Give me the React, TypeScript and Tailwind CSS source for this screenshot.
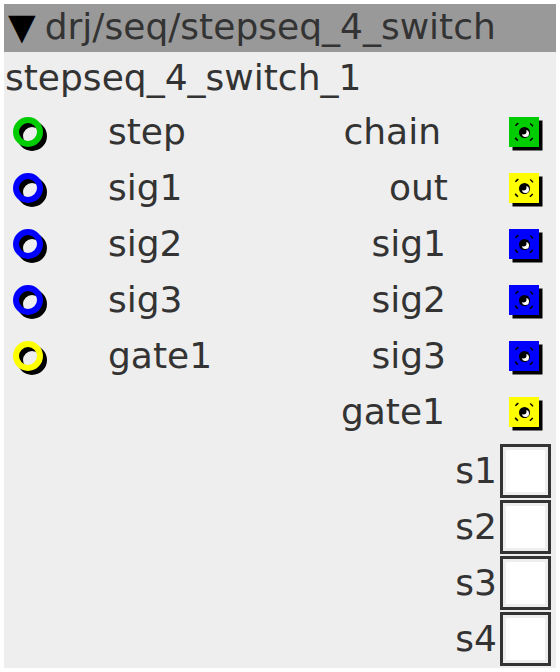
import React from 'react';

type Port = { name: string; color: string; nudge?: number };

const inlets: Port[] = [
  { name: 'step', color: '#00cc00' },
  { name: 'sig1', color: '#0000ff' },
  { name: 'sig2', color: '#0000ff' },
  { name: 'sig3', color: '#0000ff' },
  { name: 'gate1', color: '#ffff00' },
];

// labels are not all flush right in the original, nudge keeps them where they sit
const outlets: Port[] = [
  { name: 'chain', color: '#00cc00', nudge: 7 },
  { name: 'out', color: '#ffff00', nudge: 0 },
  { name: 'sig1', color: '#0000ff', nudge: 2 },
  { name: 'sig2', color: '#0000ff', nudge: 2 },
  { name: 'sig3', color: '#0000ff', nudge: 2 },
  { name: 'gate1', color: '#ffff00', nudge: 3 },
];

const switches = ['s1', 's2', 's3', 's4'];

function Inlet({ color }: { color: string }) {
  return (
    <svg width="30" height="30" className="overflow-visible shrink-0">
      <circle cx="19" cy="19" r="12" fill="none" stroke="#000" strokeWidth="6" />
      <circle cx="15" cy="15" r="12" fill="none" stroke={color} strokeWidth="6" />
    </svg>
  );
}

function Outlet({ color }: { color: string }) {
  return (
    <svg width="30" height="30" className="overflow-visible shrink-0">
      <rect x="3.5" y="3.5" width="30" height="30" fill="#000" />
      <rect x="0" y="0" width="30" height="30" fill={color} />
      <circle
        cx="15"
        cy="15"
        r="10.5"
        fill="none"
        stroke="#000"
        strokeWidth="1.5"
        strokeDasharray="4 12.49"
        strokeDashoffset="-6.25"
      />
      <circle cx="15.5" cy="15.5" r="5.5" fill="#000" />
      <circle cx="16.5" cy="16.5" r="3.5" fill="#fff" />
      <circle cx="14.5" cy="14.5" r="3" fill="#000" />
    </svg>
  );
}

export default function App() {
  return (
    <div className="min-h-screen bg-white p-[4px] text-[#333] text-[36px]" style={{ fontFamily: '"DejaVu Sans", sans-serif' }}>
      <div className="w-[552px] h-[664px] bg-[#eeeeee] flex flex-col">
        <div className="h-[48px] bg-[#999999] leading-[46px] pl-[4px] whitespace-nowrap flex">
          <span className="text-black">▼</span>
          <span className="ml-[9px]">drj/seq/stepseq_4_switch</span>
        </div>
        <div className="h-[52px] leading-[52px] pl-[1px] whitespace-nowrap">stepseq_4_switch_1</div>
        <div className="flex">
          <div className="flex flex-col">
            {inlets.map((p) => (
              <div key={p.name} className="h-[56px] flex items-center pl-[9px]">
                <Inlet color={p.color} />
                <span className="ml-[65px] leading-[56px]">{p.name}</span>
              </div>
            ))}
          </div>
          <div className="flex-1 flex flex-col items-end">
            {outlets.map((p) => (
              <div key={p.name} className="h-[56px] flex items-center pr-[17px]">
                <span className="leading-[56px]">{p.name}</span>
                <div className="flex" style={{ marginLeft: 61 + (p.nudge ?? 0) }}>
                  <Outlet color={p.color} />
                </div>
              </div>
            ))}
            <div className="flex flex-col pt-[4px]">
              {switches.map((s) => (
                <div key={s} className="h-[56px] flex items-start justify-end pr-[5px]">
                  <span className="leading-[54px]">{s}</span>
                  <div className="ml-[3px] w-[51px] h-[54px] border-[3px] border-[#333] bg-[#eeeeee] p-[3px]">
                    <div className="w-full h-full bg-white" />
                  </div>
                </div>
              ))}
            </div>
          </div>
        </div>
      </div>
    </div>
  );
}
